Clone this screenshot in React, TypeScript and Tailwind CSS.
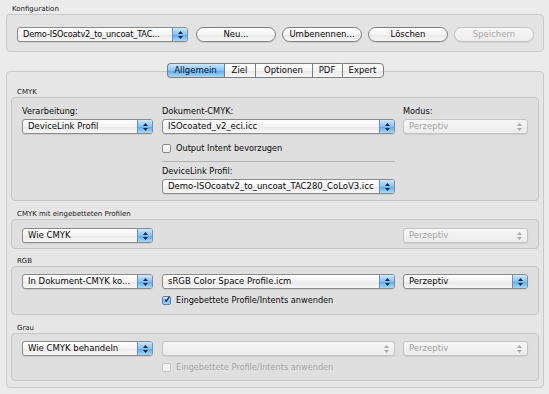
import React from "react";

function Arrows({ disabled }: { disabled?: boolean }) {
  return (
    <svg width="7" height="10" viewBox="0 0 7 10">
      <path d="M3.5 1 L6 4 H1 Z M3.5 9 L6 6 H1 Z" fill={disabled ? "#a9a9a9" : "#1c2a3a"} />
    </svg>
  );
}

function Popup({ text, w, disabled = false, tight = false }: { text: string; w: string; disabled?: boolean; tight?: boolean }) {
  return (
    <div
      className={`flex h-[15px] ${w} overflow-hidden rounded-[3px] border text-[8.5px] shadow-[0_1px_1px_rgba(0,0,0,0.08)] ${
        disabled
          ? "border-[#c3c3c3] bg-[linear-gradient(to_bottom,#f6f6f6,#ececec)] text-[#a4a4a4]"
          : "border-[#8a8a8a] bg-[linear-gradient(to_bottom,#ffffff,#f3f3f3_50%,#e9e9e9_51%,#f7f7f7)] text-[#0a0a0a]"
      }`}
    >
      <div className={`min-w-0 flex-1 overflow-hidden whitespace-nowrap pl-[5px] leading-[13px] ${tight ? "text-[8.2px] tracking-[-0.15px]" : "text-ellipsis"}`}>{text}</div>
      <div
        className={`flex w-[15px] shrink-0 items-center justify-center ${
          disabled
            ? ""
            : "border-l border-[#6a8fb8] bg-[linear-gradient(to_bottom,#cfe7fd,#86c2f5_50%,#5aa7ee_51%,#a4dafd)]"
        }`}
      >
        <Arrows disabled={disabled} />
      </div>
    </div>
  );
}

function Button({ label, disabled = false }: { label: string; disabled?: boolean }) {
  return (
    <div
      className={`flex h-[15px] w-[80px] items-center justify-center rounded-full border text-[8.5px] leading-[13px] shadow-[0_1px_1px_rgba(0,0,0,0.08)] ${
        disabled
          ? "border-[#c2c2c2] bg-[linear-gradient(to_bottom,#f7f7f7,#ededed)] text-[#a8a8a8]"
          : "border-[#7d7d7d] bg-[linear-gradient(to_bottom,#ffffff,#f4f4f4_50%,#e8e8e8_51%,#f8f8f8)] text-[#0a0a0a]"
      }`}
    >
      {label}
    </div>
  );
}

function Check({ label, checked = false, disabled = false }: { label: string; checked?: boolean; disabled?: boolean }) {
  return (
    <div className={`flex h-[10px] items-center gap-[5px] ${disabled ? "text-[#a6a6a6]" : "text-[#0a0a0a]"}`}>
      <div
        className={`flex h-[9px] w-[9px] shrink-0 items-center justify-center rounded-[2px] border ${
          checked
            ? "border-[#5a7fa8] bg-[linear-gradient(to_bottom,#cfe7fd,#86c2f5_50%,#5aa7ee_51%,#a4dafd)]"
            : disabled
            ? "border-[#c6c6c6] bg-[#f3f3f3]"
            : "border-[#8a8a8a] bg-[linear-gradient(to_bottom,#ffffff,#ececec)]"
        }`}
      >
        {checked && (
          <svg width="9" height="9" viewBox="0 0 9 9" className="-mt-[2px] ml-[1px]">
            <path d="M1.5 4.5 L3.5 7 L8 0.5" stroke="#111" strokeWidth="1.6" fill="none" />
          </svg>
        )}
      </div>
      <span className="whitespace-nowrap leading-[10px]">{label}</span>
    </div>
  );
}

function GroupLabel({ text }: { text: string }) {
  return <div className="h-[12px] pl-[6px] text-[7px] leading-[14px] text-[#1a1a1a]">{text}</div>;
}

function Tab({ label, w, selected = false, first = false, last = false }: { label: string; w: string; selected?: boolean; first?: boolean; last?: boolean }) {
  return (
    <div
      className={`flex h-[15px] ${w} items-center justify-center border-y border-[#7d7d7d] text-[8.5px] leading-[13px] ${
        first ? "rounded-l-[4px] border-l" : "border-l"
      } ${last ? "rounded-r-[4px] border-r" : ""} ${
        selected
          ? "border-[#5f7fa4] bg-[linear-gradient(to_bottom,#cfe7fd,#86c2f5_50%,#5aa7ee_51%,#a4dafd)] text-[#0a1525]"
          : "bg-[linear-gradient(to_bottom,#ffffff,#f4f4f4_50%,#e8e8e8_51%,#f8f8f8)] text-[#0a0a0a]"
      }`}
    >
      {label}
    </div>
  );
}

export default function App() {
  return (
    <div className="h-[394px] w-[549px] overflow-hidden bg-[#ebebeb] pl-[6px] pr-[5px] pt-[2px] font-['DejaVu_Sans',Verdana,sans-serif] text-[8.2px] text-[#0a0a0a]">
      <GroupLabel text="Konfiguration" />
      <div className="h-[38px] rounded-[4px] border border-[#c9c9c9] bg-[#e3e3e3] pl-[10px] pt-[12px]">
        <div className="flex items-center">
          <Popup text="Demo-ISOcoatv2_to_uncoat_TAC..." w="w-[171px]" tight />
          <div className="ml-[8px] flex gap-[6px]">
            <Button label="Neu..." />
            <Button label="Umbenennen..." />
            <Button label="Löschen" />
            <Button label="Speichern" disabled />
          </div>
        </div>
      </div>

      <div className="relative z-10 mt-[11px] flex justify-center">
        <Tab label="Allgemein" w="w-[57px]" selected first />
        <Tab label="Ziel" w="w-[31px]" />
        <Tab label="Optionen" w="w-[57px]" />
        <Tab label="PDF" w="w-[30px]" />
        <Tab label="Expert" w="w-[42px]" last />
      </div>

      <div className="-mt-[7px] rounded-[4px] border border-[#c9c9c9] bg-[#e6e6e6] px-[4px] pb-[6px] pt-[13px]">
        <GroupLabel text="CMYK" />
        <div className="rounded-[4px] border border-[#c6c6c6] bg-[#dfdfdf] pb-[6px] pl-[10px] pt-[8px]">
          <div className="flex gap-[9px]">
            <div className="w-[131px]">
              <div className="mb-[2px] h-[11px] leading-[11px]">Verarbeitung:</div>
              <Popup text="DeviceLink Profil" w="w-[131px]" />
            </div>
            <div className="w-[233px]">
              <div className="mb-[2px] h-[11px] leading-[11px]">Dokument-CMYK:</div>
              <Popup text="ISOcoated_v2_eci.icc" w="w-[233px]" />
              <div className="mt-[9px]">
                <Check label="Output Intent bevorzugen" />
              </div>
              <div className="mt-[8px] h-px bg-[#b0b0b0]" />
              <div className="mb-[2px] mt-[4px] h-[11px] leading-[11px]">DeviceLink Profil:</div>
              <Popup text="Demo-ISOcoatv2_to_uncoat_TAC280_CoLoV3.icc" w="w-[233px]" />
            </div>
            <div className="ml-[-1px] w-[125px]">
              <div className="mb-[2px] h-[11px] leading-[11px]">Modus:</div>
              <Popup text="Perzeptiv" w="w-[125px]" disabled />
            </div>
          </div>
        </div>

        <div className="mt-[6px]">
          <GroupLabel text="CMYK mit eingebetteten Profilen" />
        </div>
        <div className="rounded-[4px] border border-[#c6c6c6] bg-[#dfdfdf] pb-[5px] pl-[10px] pt-[8px]">
          <div className="flex gap-[9px]">
            <Popup text="Wie CMYK" w="w-[131px]" />
            <div className="w-[233px]" />
            <div className="ml-[-1px]">
              <Popup text="Perzeptiv" w="w-[125px]" disabled />
            </div>
          </div>
        </div>

        <div className="mt-[5px]">
          <GroupLabel text="RGB" />
        </div>
        <div className="rounded-[4px] border border-[#c6c6c6] bg-[#dfdfdf] pb-[9px] pl-[10px] pt-[7px]">
          <div className="flex gap-[9px]">
            <Popup text="In Dokument-CMYK ko..." w="w-[131px]" />
            <div className="w-[233px]">
              <Popup text="sRGB Color Space Profile.icm" w="w-[233px]" />
              <div className="mt-[6px]">
                <Check label="Eingebettete Profile/Intents anwenden" checked />
              </div>
            </div>
            <div className="ml-[-1px]">
              <Popup text="Perzeptiv" w="w-[125px]" />
            </div>
          </div>
        </div>

        <div className="mt-[6px]">
          <GroupLabel text="Grau" />
        </div>
        <div className="rounded-[4px] border border-[#c6c6c6] bg-[#dfdfdf] pb-[8px] pl-[10px] pt-[7px]">
          <div className="flex gap-[9px]">
            <Popup text="Wie CMYK behandeln" w="w-[131px]" />
            <div className="w-[233px]">
              <Popup text="" w="w-[233px]" disabled />
              <div className="mt-[6px]">
                <Check label="Eingebettete Profile/Intents anwenden" disabled />
              </div>
            </div>
            <div className="ml-[-1px]">
              <Popup text="Perzeptiv" w="w-[125px]" disabled />
            </div>
          </div>
        </div>
      </div>
    </div>
  );
}
